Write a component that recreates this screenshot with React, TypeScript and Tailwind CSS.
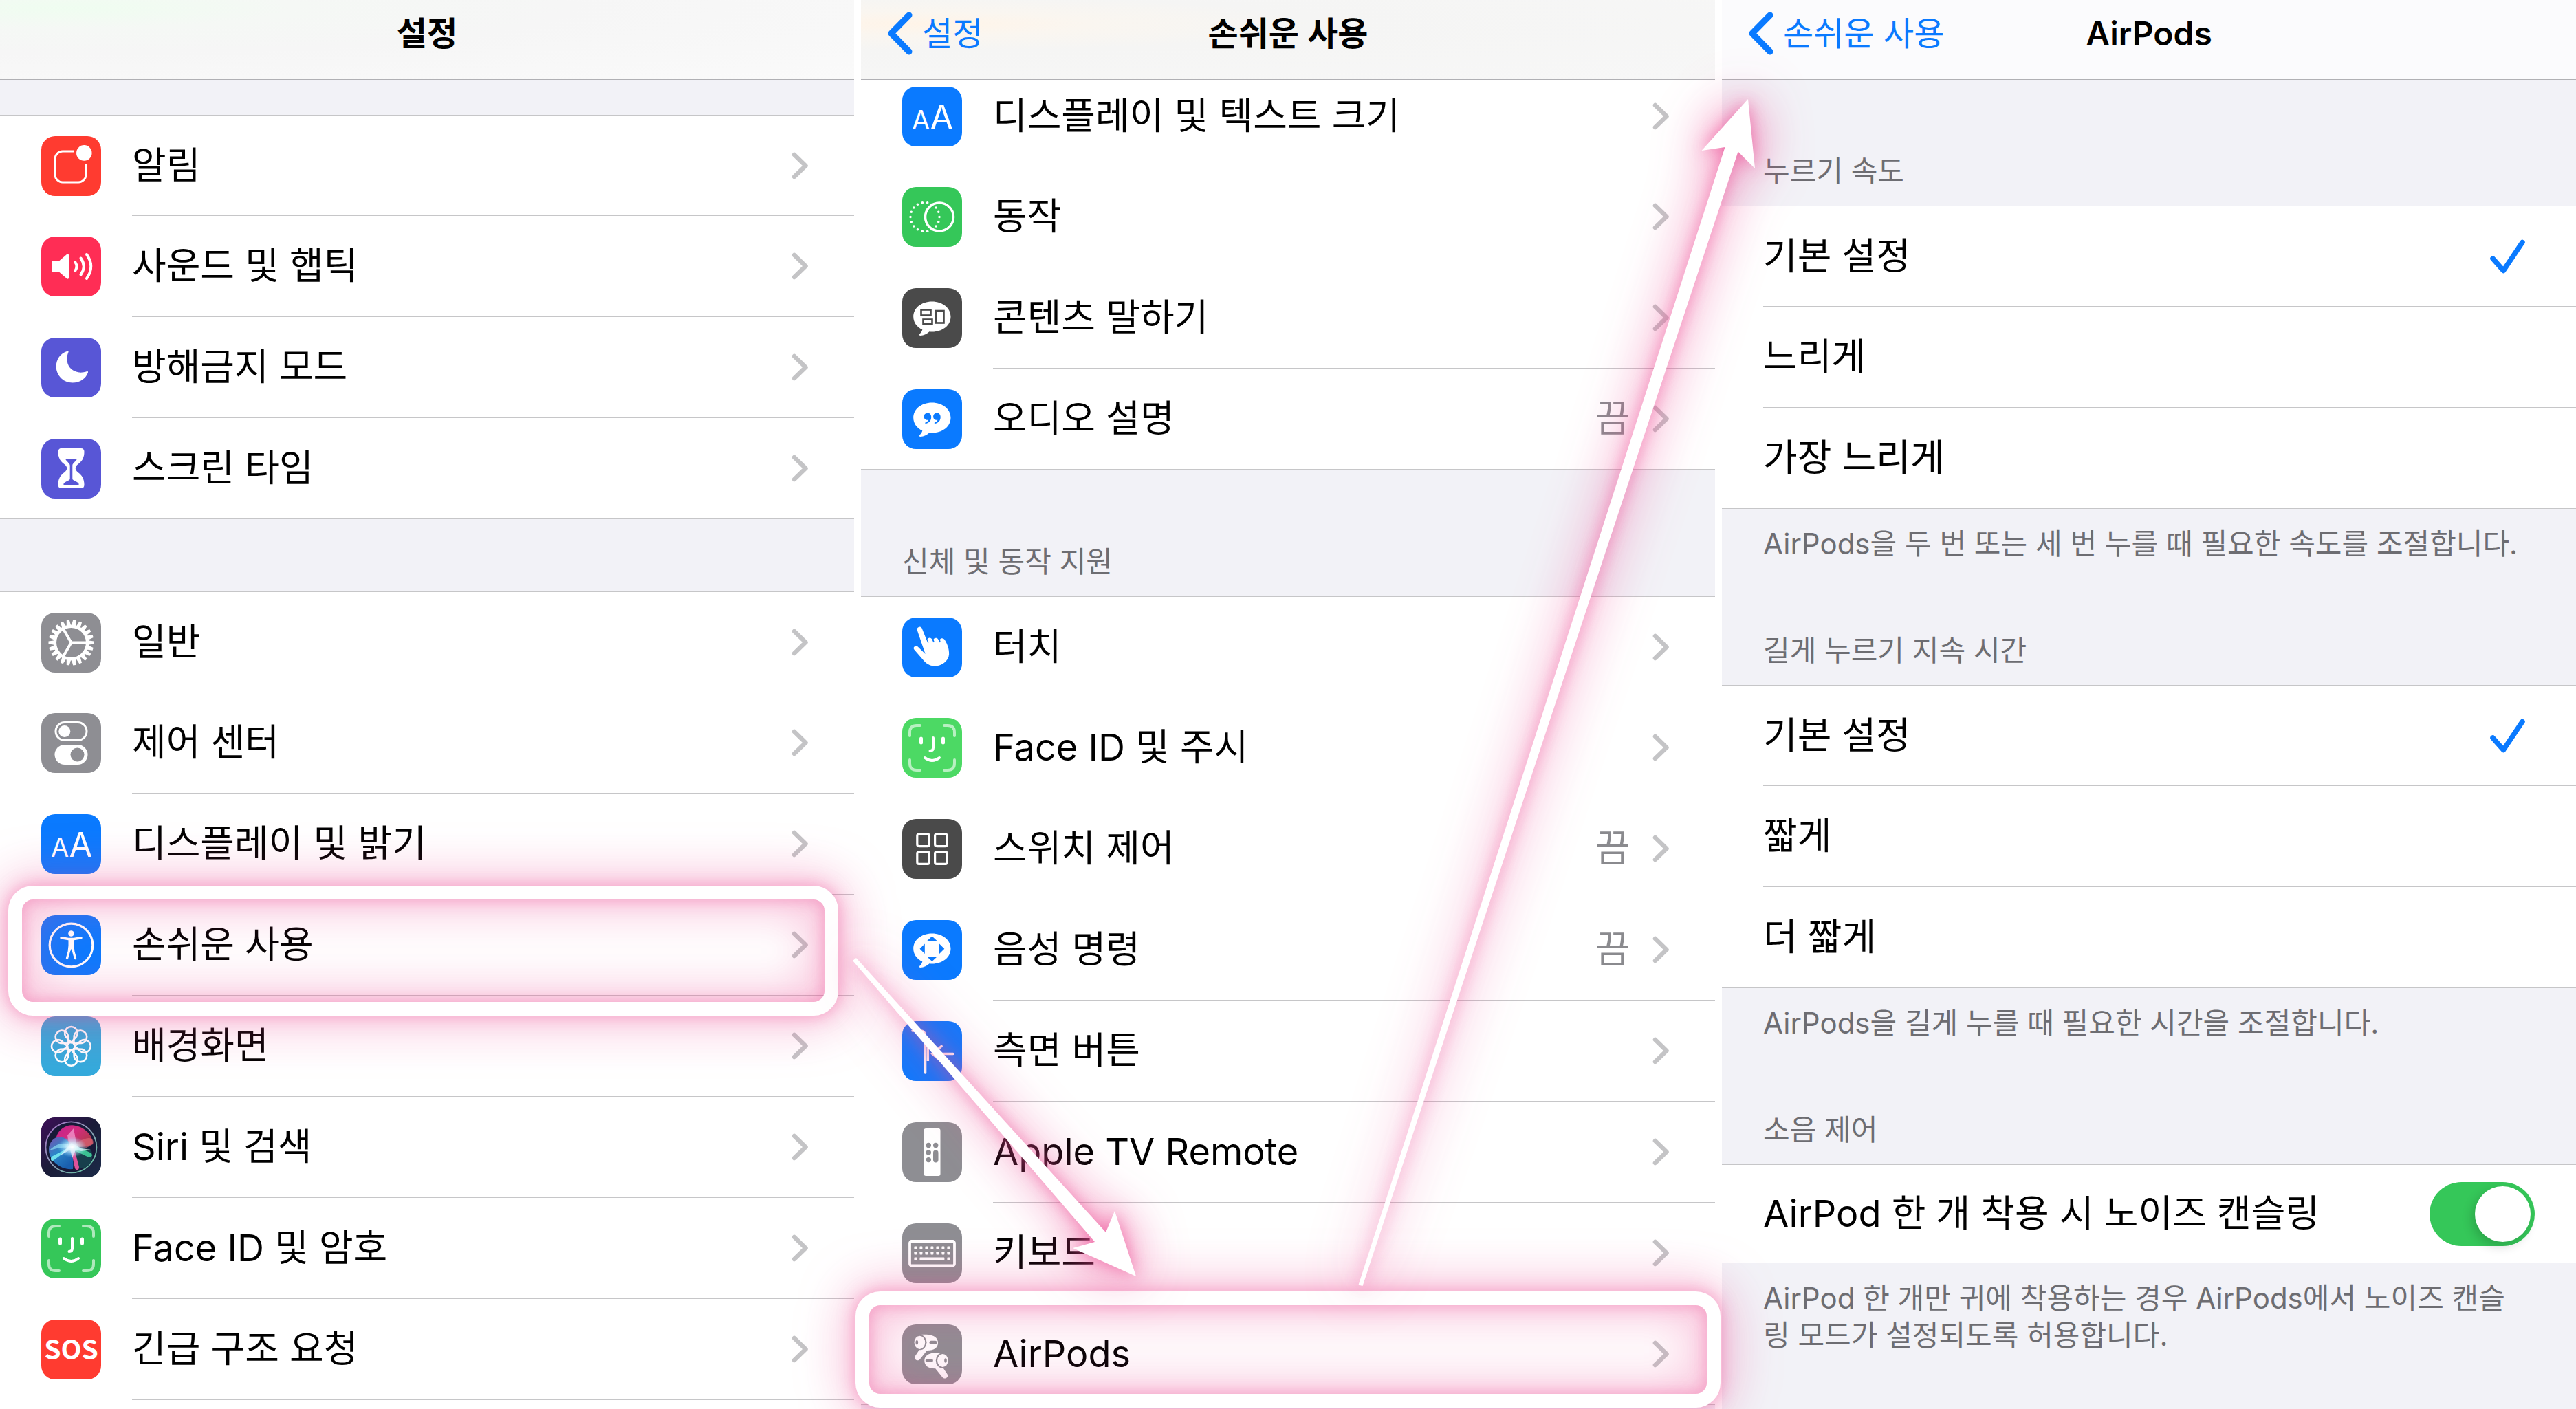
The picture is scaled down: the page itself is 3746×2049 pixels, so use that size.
import { useState } from "react";
import type { ReactNode } from "react";
import clsx from "clsx";

type Item = {
  label: string;
  icon: ReactNode;
  color: string;
  value?: string;
  ring?: string;
};

/* ---------- icons (87 x 87 tiles) ---------- */

const fontLatin = "font-['Inter',sans-serif]";

function BellIcon() {
  return (
    <>
      <path
        d="M47 22H31a11 11 0 0 0-11 11v23a11 11 0 0 0 11 11h23a11 11 0 0 0 11-11V40"
        fill="none"
        stroke="#fff"
        strokeWidth="3"
      />
      <circle cx="62.3" cy="24.4" r="11.3" fill="#fff" />
    </>
  );
}

function SoundIcon() {
  return (
    <g fill="none" stroke="#fff" strokeWidth="4" strokeLinecap="round">
      <path
        d="M18 35h8.500l10.500-9c1.500-1.200 3-.8 3 1.200v32.600c0 2-1.500 2.400-3 1.200l-10.500-9H18c-2 0-3-1-3-3V38c0-2 1-3 3-3z"
        fill="#fff"
        stroke="none"
      />
      <path d="M49.500 37.500q4 6 0 12M57.500 31.500q8.500 12 0 24M66 26q12.500 17.500 0 35" />
    </g>
  );
}

function MoonIcon() {
  return (
    <path
      d="M38.500 19.500C27 23 21.700 32 21.700 42a23.500 23.500 0 0 0 23.500 23.600C56 65.600 65 59.500 68 50.500c.3-1.200-.4-1.800-1.500-1.500-4 1.300-8 2-11.500 1.500C43 49 37 40 37.500 30c.1-4 1-6.500 2-9 .4-1.100-.1-1.700-1-1.500z"
      fill="#fff"
    />
  );
}

function HourglassIcon() {
  return (
    <>
      <path
        d="M29 14h29c3 0 4.500 2 4.500 5 0 9-3.500 14-9 18-5 4-5 8 0 12 5.500 4 9 9 9 18 0 3-1.500 5-4.500 5H29c-3 0-4.500-2-4.500-5 0-9 3.500-14 9-18 5-4 5-8 0-12-5.500-4-9-9-9-18 0-3 1.500-5 4.500-5z"
        fill="#fff"
      />
      <path
        d="M35 29.500h17c-2.500 4.500-6.700 6-6.700 9.500v20c2 2.500 7.700 3.500 9.200 6.500.5 1-.3 2-1.500 2H34c-1.200 0-2-1-1.500-2 1.500-3 7.200-4 9.200-6.500V39c0-3.500-4.200-5-6.700-9.500z"
        fill="#5856d6"
      />
    </>
  );
}

function GearIcon() {
  const teeth = Array.from({ length: 22 }, (_, i) => i);
  return (
    <g transform="translate(43.5 43.5)">
      {teeth.map((i) => (
        <path
          key={i}
          d="M24-3.300L33-2v4L24 3.300z"
          fill="#fff"
          transform={`rotate(${(i * 360) / 22})`}
        />
      ))}
      <circle r="23.700" fill="none" stroke="#fff" strokeWidth="4.500" />
      <path
        d="M0 0H23M0 0L-11.500-20M0 0L-11.500 20"
        stroke="#fff"
        strokeWidth="4"
      />
    </g>
  );
}

function ControlIcon() {
  return (
    <>
      <rect x="21" y="13.500" width="45" height="26" rx="13" fill="none" stroke="#fff" strokeWidth="3" />
      <circle cx="33.800" cy="26.500" r="8.500" fill="#fff" />
      <rect x="19.500" y="46" width="48" height="29" rx="14.500" fill="#fff" />
      <circle cx="52.500" cy="60.500" r="10" fill="#8e8e93" />
    </>
  );
}

function TextSizeIcon() {
  return (
    <g fill="#fff" textAnchor="middle" className={fontLatin}>
      <text x="27" y="62" fontSize="38">
        A
      </text>
      <text x="57.500" y="62" fontSize="49">
        A
      </text>
    </g>
  );
}

function AccessibilityIcon() {
  return (
    <g stroke="#fff" strokeLinecap="round" strokeLinejoin="round">
      <circle cx="43.500" cy="43.500" r="31.300" fill="none" strokeWidth="3.200" />
      <circle cx="43.500" cy="26.500" r="4.200" fill="#fff" stroke="none" />
      <path d="M29 32.700l10.500 1.800h8L58 32.700M41 50l-3.500 12.500M46 50l3.500 12.500" fill="none" strokeWidth="3.400" />
      <path d="M40.500 35.500h6V44l.8 7h-2L43.500 46l-1.800 5h-2l.8-7z" fill="#fff" strokeWidth="2" />
    </g>
  );
}

function FlowerIcon() {
  return (
    <g transform="translate(43.4 43.4)" fill="none" stroke="#fff" strokeWidth="2.600">
      {[0, 45, 90, 135, 180, 225, 270, 315].map((deg) => (
        <path
          key={deg}
          d="M0-5.500L-7.800-14A9.300 9.300 0 1 1 7.800-14z"
          transform={`rotate(${deg})`}
        />
      ))}
      <circle r="5.500" />
    </g>
  );
}

function SiriIcon() {
  return (
    <>
      <defs>
        <linearGradient id="siriBg" x1="0" y1="0" x2="1" y2="1">
          <stop offset="0" stopColor="#3d0f58" />
          <stop offset=".5" stopColor="#1a1c38" />
          <stop offset="1" stopColor="#1b2b48" />
        </linearGradient>
        <linearGradient id="siriPink" x1="0" y1="0" x2="1" y2=".6">
          <stop offset="0" stopColor="#c2228e" />
          <stop offset=".5" stopColor="#d32b7f" />
          <stop offset="1" stopColor="#b23a4c" />
        </linearGradient>
        <linearGradient id="siriBlue" x1="0" y1="0" x2=".6" y2="1">
          <stop offset="0" stopColor="#7a4fb0" />
          <stop offset=".5" stopColor="#2b86c8" />
          <stop offset="1" stopColor="#1a5fae" />
        </linearGradient>
        <linearGradient id="siriRim" x1="0" y1="0" x2="1" y2="1">
          <stop offset="0" stopColor="#a56ac4" />
          <stop offset=".5" stopColor="#8fa0b8" />
          <stop offset="1" stopColor="#56c29a" />
        </linearGradient>
        <radialGradient id="siriGlow">
          <stop offset="0" stopColor="#fff" />
          <stop offset=".4" stopColor="#d8f4ff" stopOpacity=".8" />
          <stop offset="1" stopColor="#8fd8ff" stopOpacity="0" />
        </radialGradient>
      </defs>
      <rect width="87" height="87" fill="url(#siriBg)" />
      <circle cx="43.400" cy="43.400" r="37" fill="#171a38" stroke="url(#siriRim)" strokeWidth="1.800" />
      <path d="M22 28C26 15 40 9 50 12c15 3 25 15 25 26-8 6-22 4-31 4-5-8-14-14-22-14z" fill="url(#siriPink)" />
      <path d="M11 46c0-10 8-18 16-18 9 1 15 8 17 14 2 12 3 24 2 33-10 1-20-3-27-10-6-6-8-13-8-19z" fill="url(#siriBlue)" />
      <path d="M44 42l27 4c6 6 4 20-4 25-6 4-14 4-17 3z" fill="#173f4c" />
      <path d="M44 42l22 2 9-5c2-4 0-9-6-9-9 1-18 6-25 12z" fill="#e06a7a" opacity=".6" />
      <path d="M42 38l29 13c5 3 3 8-4 6L44 46z" fill="#3fd09a" opacity=".9" />
      <path d="M42 42h5l8 30c0 5-4 6-6 2z" fill="#e0529a" />
      <path d="M48 40L17 63c-3 1-4-3-2-6z" fill="#6fe0ec" />
      <path d="M41 43L38 26l9-10 5 26z" fill="#f3a2d4" opacity=".7" />
      <path d="M43 45c-8-3-22 0-31 3 8-9 22-15 33-5z" fill="#8adcf2" opacity=".7" />
      <path d="M44 37l14 8 14 2-14 2-8-2-5 12-3-12-14 8 12-14z" fill="#fff" opacity=".7" />
      <ellipse cx="45" cy="43" rx="21" ry="15" fill="url(#siriGlow)" />
    </>
  );
}

function FaceIcon() {
  return (
    <g fill="none" stroke="#fff" strokeWidth="5" strokeLinecap="round">
      <g opacity=".6" strokeWidth="4">
        <path d="M11 26v-5q0-10 10-10h5M61 11h5q10 0 10 10v5M76 61v5q0 10-10 10h-5M26 76h-5q-10 0-10-10v-5" />
      </g>
      <path d="M27.500 30v6M59.500 30v6" />
      <path d="M45 29v14.500q0 4.500-4.500 4.500M33 58q10.500 8 21 0" strokeWidth="4" />
    </g>
  );
}

function SosIcon() {
  return (
    <text
      x="43.500"
      y="58"
      fontSize="39"
      fontWeight="700"
      textAnchor="middle"
      fill="#fff"
      className="font-['Noto_Sans_CJK_KR',sans-serif]"
    >
      SOS
    </text>
  );
}

function MotionIcon() {
  const dots = Array.from({ length: 18 }, (_, i) => (i * Math.PI * 2) / 18);
  return (
    <>
      {dots.map((a) => (
        <circle key={a} cx={33 + 21 * Math.cos(a)} cy={43.5 + 21 * Math.sin(a)} r="1.800" fill="#fff" />
      ))}
      <circle cx="54" cy="43.500" r="20.500" fill="none" stroke="#fff" strokeWidth="3.500" />
    </>
  );
}

function Bubble() {
  return (
    <path
      d="M43.300 19.500c15.500 0 27.200 9.500 27.200 22s-11.700 22-27.200 22c-1.300 0-2.600 0-3.800-.2-3.500 3.200-8 5.500-13 5.700-1.700 0-2.200-1.400-1-2.600 2-2 3.400-4 3.800-6.200C21 56.400 16.200 49.500 16.200 41.500c0-12.500 11.600-22 27.100-22z"
      fill="#fff"
    />
  );
}

function SpeakContentIcon() {
  return (
    <>
      <Bubble />
      <g fill="none" stroke="#4a4a4a" strokeWidth="2.600">
        <rect x="27.500" y="31.500" width="14" height="8" />
        <rect x="30.500" y="45.500" width="13" height="6.500" />
        <rect x="49" y="33" width="11.500" height="17.500" />
      </g>
    </>
  );
}

function QuoteIcon() {
  return (
    <>
      <Bubble />
      <g fill="#0a7aff">
        <path d="M37 34.500c3.200 0 5.200 2.400 5.200 6 0 5-3 8.500-7.700 9.500-1.500.2-1.700-1.300-.6-1.700 2.400-.9 3.600-2 4-3.600-3.500.8-6.300-1.500-6.300-4.900 0-3 2.300-5.300 5.400-5.300z" />
        <path d="M50.500 34.500c3.200 0 5.200 2.400 5.200 6 0 5-3 8.500-7.700 9.500-1.500.2-1.700-1.300-.6-1.700 2.400-.9 3.600-2 4-3.600-3.500.8-6.300-1.500-6.300-4.900 0-3 2.300-5.300 5.400-5.300z" />
      </g>
    </>
  );
}

function TouchIcon() {
  return (
    <path
      d="M21.800 18.400a3.700 3.700 0 0 1 6.800-2.800L37.200 37l1.200-.6-1.900-4.400c.8-2.800 4.600-3.400 6.500-.8l2.400 5 1.400-.6-1.300-3.600c1.300-2.800 5-3 6.800-.2l2.200 4.400 1.400-.5-1.100-3.800c2-2.600 5.800-1.900 7.500 1.300C65.800 39 68.400 46 68.100 53.500c-.4 5-2.600 8.800-7 12.300-5 4-11.600 5.600-18.200 4.200-5.800-1.300-9.900-5-13.900-10L17.300 46.500c-2.300-3.600 2-6.700 5.200-4.200L33.600 53z"
      fill="#fff"
    />
  );
}

function SwitchIcon() {
  return (
    <g fill="none" stroke="#fff" strokeWidth="3.200">
      <rect x="21.800" y="22" width="17.600" height="17.600" rx="2.500" />
      <rect x="47.600" y="22" width="17.600" height="17.600" rx="2.500" />
      <rect x="21.800" y="47.800" width="17.600" height="17.600" rx="2.500" />
      <rect x="47.600" y="47.800" width="17.600" height="17.600" rx="2.500" />
    </g>
  );
}

function VoiceIcon() {
  return (
    <>
      <Bubble />
      <path
        d="M43.400 23.500l7.600 7H35.800zM43.400 60l7.600-7H35.800zM25.500 41.800l7.300-7.200v14.400zM61.300 41.800L54 34.600v14.400z"
        fill="#0a7aff"
      />
    </>
  );
}

function SideButtonIcon() {
  return (
    <g fill="none" stroke="#fff" strokeWidth="3.600" strokeLinecap="round">
      <path d="M15 14h11q7.500 0 7.500 8v53" />
      <path d="M37.300 32v26" strokeLinecap="butt" />
      <path d="M74 47.500H44M57 36.500l-13 11 13 11" />
    </g>
  );
}

function RemoteIcon() {
  return (
    <>
      <rect x="31.500" y="9" width="24" height="69" rx="3" fill="#fff" />
      <g fill="#8e8e93">
        <circle cx="38.300" cy="33.500" r="3.700" />
        <circle cx="48.700" cy="33.500" r="3.700" />
        <circle cx="38.300" cy="44" r="3.700" />
        <circle cx="38.300" cy="54.600" r="3.700" />
        <rect x="45" y="40.500" width="7.500" height="18" rx="3.700" />
      </g>
    </>
  );
}

function KeyboardIcon() {
  const cols = [19.4, 27.4, 35.4, 43.4, 51.4, 59.4, 67.4];
  return (
    <>
      <rect x="11" y="26" width="65" height="35.500" rx="2.500" fill="none" stroke="#fff" strokeWidth="3.800" />
      <g fill="#fff">
        {cols.map((x) => (
          <g key={x}>
            <rect x={x - 2} y="33.500" width="4" height="4" rx=".8" />
            <rect x={x - 2} y="41.500" width="4" height="4" rx=".8" />
          </g>
        ))}
        <rect x="17.400" y="49.500" width="4" height="4" rx=".8" />
        <rect x="25.400" y="49.500" width="36" height="4" rx=".8" />
        <rect x="65.400" y="49.500" width="4" height="4" rx=".8" />
      </g>
    </>
  );
}

function Pod() {
  return (
    <>
      <path d="M23 15.500C32 14 52 13.500 52 26.500c0 7-5 11.500-16 11.500L25.500 51c-3.500 3.500-9-.5-7-4.500l8-12z" fill="#fff" />
      <ellipse cx="26" cy="26.300" rx="9.500" ry="11" fill="#8e8e93" />
      <ellipse cx="25.400" cy="26.300" rx="7.800" ry="9.600" fill="#fff" />
      <ellipse cx="21.300" cy="26.300" rx="1.800" ry="3.200" fill="#8e8e93" />
      <rect x="39.500" y="23.800" width="11" height="5" rx="2.500" fill="#8e8e93" />
    </>
  );
}

function AirPodsIcon() {
  return (
    <>
      <Pod />
      <g transform="translate(84.3 26.2) scale(-1 1)">
        <Pod />
      </g>
    </>
  );
}

/* ---------- data ---------- */

const alertItems: Item[] = [
  { label: "알림", icon: <BellIcon />, color: "bg-[#ff3b30]" },
  { label: "사운드 및 햅틱", icon: <SoundIcon />, color: "bg-[#ff2d55]" },
  { label: "방해금지 모드", icon: <MoonIcon />, color: "bg-[#5856d6]" },
  { label: "스크린 타임", icon: <HourglassIcon />, color: "bg-[#5856d6]" },
];

const generalItems: Item[] = [
  { label: "일반", icon: <GearIcon />, color: "bg-[#8e8e93]" },
  { label: "제어 센터", icon: <ControlIcon />, color: "bg-[#8e8e93]" },
  { label: "디스플레이 및 밝기", icon: <TextSizeIcon />, color: "bg-[#0a7aff]" },
  {
    label: "손쉬운 사용",
    icon: <AccessibilityIcon />,
    color: "bg-[#0a7aff]",
    ring: "left-3 right-[23px] -top-[13px] -bottom-[29px]",
  },
  { label: "배경화면", icon: <FlowerIcon />, color: "bg-[#34aadc]" },
  { label: "Siri 및 검색", icon: <SiriIcon />, color: "bg-[#1a1c38]" },
  { label: "Face ID 및 암호", icon: <FaceIcon />, color: "bg-[#35c759]" },
  { label: "긴급 구조 요청", icon: <SosIcon />, color: "bg-[#ff3b30]" },
];

const visionItems: Item[] = [
  { label: "디스플레이 및 텍스트 크기", icon: <TextSizeIcon />, color: "bg-[#0a7aff]" },
  { label: "동작", icon: <MotionIcon />, color: "bg-[#35c759]" },
  { label: "콘텐츠 말하기", icon: <SpeakContentIcon />, color: "bg-[#4a4a4a]" },
  { label: "오디오 설명", icon: <QuoteIcon />, color: "bg-[#0a7aff]", value: "끔" },
];

const motorItems: Item[] = [
  { label: "터치", icon: <TouchIcon />, color: "bg-[#0a7aff]" },
  { label: "Face ID 및 주시", icon: <FaceIcon />, color: "bg-[#4cd964]" },
  { label: "스위치 제어", icon: <SwitchIcon />, color: "bg-[#4a4a4a]", value: "끔" },
  { label: "음성 명령", icon: <VoiceIcon />, color: "bg-[#0a7aff]", value: "끔" },
  { label: "측면 버튼", icon: <SideButtonIcon />, color: "bg-[#0a7aff]" },
  { label: "Apple TV Remote", icon: <RemoteIcon />, color: "bg-[#8e8e93]" },
  { label: "키보드", icon: <KeyboardIcon />, color: "bg-[#8e8e93]" },
  {
    label: "AirPods",
    icon: <AirPodsIcon />,
    color: "bg-[#8e8e93]",
    ring: "-left-2 -right-2 -top-[18px] -bottom-[5px]",
  },
];

/* ---------- building blocks ---------- */

function Chevron() {
  return (
    <svg viewBox="0 0 24 40" className="h-10 w-6 shrink-0">
      <path
        d="M4 4l16.500 16L4 36"
        fill="none"
        stroke="#c4c4c6"
        strokeWidth="6.500"
        strokeLinecap="round"
        strokeLinejoin="round"
      />
    </svg>
  );
}

type NavBarProps = {
  title: string;
  back?: string;
  className: string;
};

function NavBar({ title, back, className }: NavBarProps) {
  return (
    <header
      className={clsx(
        "relative z-10 grid h-[116px] shrink-0 grid-cols-[1fr_auto_1fr] items-center border-b border-[#b0b0b4] pr-[38px] pb-[18px] pl-[38px] text-[48px] leading-[60px]",
        className
      )}
    >
      {back ? (
        <a href="#" className="flex items-center gap-[14px] text-[#0a7aff]">
          <svg viewBox="0 0 37 63" className="h-[63px] w-[37px]">
            <path
              d="M32 5L6 31.500 32 58"
              fill="none"
              stroke="currentColor"
              strokeWidth="9"
              strokeLinecap="round"
              strokeLinejoin="round"
            />
          </svg>
          {back}
        </a>
      ) : (
        <span />
      )}
      <h1 className="font-semibold">{title}</h1>
      <span />
    </header>
  );
}

function Row({ item, full }: { item: Item; full: boolean }) {
  return (
    <li
      className={clsx(
        "relative h-[147px] first:h-[146px]",
        full && "border-b border-[#c6c6c8]"
      )}
    >
      <button type="button" className="flex h-full w-full items-center gap-[45px] pl-[60px] text-left">
        <svg viewBox="0 0 87 87" className={clsx("size-[87px] shrink-0 rounded-[20px]", item.color)}>
          {item.icon}
        </svg>
        <span
          className={clsx(
            "flex grow items-center self-stretch pr-[67px]",
            !full && "border-b border-[#c6c6c8]"
          )}
        >
          <span className="grow">{item.label}</span>
          {item.value && <span className="pr-[33px] text-[#8a8a8e]">{item.value}</span>}
          <Chevron />
        </span>
      </button>
      {item.ring && (
        <span
          className={clsx(
            "pointer-events-none absolute z-20 rounded-[36px] border-[20px] border-white [filter:drop-shadow(0_0_12px_rgba(236,72,146,.5))_drop-shadow(0_0_36px_rgba(236,72,146,.75))]",
            item.ring
          )}
        />
      )}
    </li>
  );
}

function Group({ items, open, className }: { items: Item[]; open?: boolean; className?: string }) {
  return (
    <ul className={clsx("shrink-0 border-t border-[#c6c6c8] bg-white", className)}>
      {items.map((item, i) => (
        <Row key={item.label} item={item} full={!open && i === items.length - 1} />
      ))}
    </ul>
  );
}

function SectionTitle({ children, className }: { children: ReactNode; className: string }) {
  return (
    <h2 className={clsx("flex shrink-0 items-end px-[60px] pb-[23px] text-[42px] leading-[54px] text-[#6d6d72]", className)}>
      {children}
    </h2>
  );
}

function Note({ children }: { children: ReactNode }) {
  return (
    <p className="shrink-0 pt-6 pr-[76px] pl-[60px] text-[42px] leading-[54px] text-[#6d6d72]">
      {children}
    </p>
  );
}

function RadioGroup({ name, options }: { name: string; options: string[] }) {
  const [selected, setSelected] = useState(options[0]);

  return (
    <div role="radiogroup" aria-label={name} className="shrink-0 border-y border-[#c6c6c8] bg-white pl-[60px]">
      {options.map((option) => (
        <label
          key={option}
          className="relative flex h-[147px] items-center border-b border-[#c6c6c8] pr-[74px] first:h-[146px] last:h-[146px] last:border-b-0"
        >
          <input
            type="radio"
            name={name}
            className="peer sr-only"
            checked={selected === option}
            onChange={() => setSelected(option)}
          />
          <span className="grow">{option}</span>
          <svg viewBox="0 0 51 50" className="invisible h-[50px] w-[51px] peer-checked:visible">
            <path
              d="M4 28l15.500 17.500L47 4.500"
              fill="none"
              stroke="#0a7aff"
              strokeWidth="7.500"
              strokeLinecap="round"
              strokeLinejoin="round"
            />
          </svg>
        </label>
      ))}
    </div>
  );
}

// Setas que ligam uma tela à seguinte
function Arrows() {
  return (
    <svg
      viewBox="0 0 3746 2049"
      className="pointer-events-none absolute inset-0 z-30 h-full w-full [filter:drop-shadow(0_0_12px_rgba(236,72,146,.65))_drop-shadow(0_0_36px_rgba(236,72,146,.85))]"
    >
      <path d="M1240 1397L1245 1393L1608 1792L1621 1761L1652 1856L1560 1815L1592 1806z" fill="#fff" />
      <path d="M1975.500 1868.500L1981.500 1870L2527.500 220.500L2552 245L2542 144L2474.500 219L2508.500 214z" fill="#fff" />
    </svg>
  );
}

export default function App() {
  const [noiseCancel, setNoiseCancel] = useState(true);

  return (
    <main
      lang="ko"
      className="relative grid h-screen grid-cols-3 gap-[10px] overflow-hidden bg-white font-['Inter','Noto_Sans_CJK_KR',sans-serif] text-[54px] leading-[72px] text-black"
    >
      <section className="flex min-w-0 flex-col bg-[#f2f2f7]">
        <NavBar
          title="설정"
          className="bg-[radial-gradient(ellipse_at_8%_10%,#effdf0_0%,#f5f8f5_20%,#f6f6f6_45%,#fafafa_100%)]"
        />
        <Group items={alertItems} className="mt-[51px]" />
        <Group items={generalItems} open className="mt-[105px] grow" />
      </section>

      <section className="flex min-w-0 flex-col bg-[#f2f2f7]">
        <NavBar
          title="손쉬운 사용"
          back="설정"
          className="bg-[radial-gradient(ellipse_at_7%_30%,#fff4e8_0%,#faf6f0_15%,#f5f5f4_35%,#f7f7f7_100%)]"
        />
        <Group items={visionItems} className="-mt-[21px]" />
        <SectionTitle className="h-[184px]">신체 및 동작 지원</SectionTitle>
        <Group items={motorItems} />
      </section>

      <section className="flex min-w-0 flex-col bg-[#f2f2f7]">
        <NavBar title="AirPods" back="손쉬운 사용" className="bg-[#fbfbfd]" />
        <SectionTitle className="h-[183px]">누르기 속도</SectionTitle>
        <RadioGroup name="누르기 속도" options={["기본 설정", "느리게", "가장 느리게"]} />
        <Note>AirPods을 두 번 또는 세 번 누를 때 필요한 속도를 조절합니다.</Note>
        <SectionTitle className="h-[178px]">길게 누르기 지속 시간</SectionTitle>
        <RadioGroup name="길게 누르기 지속 시간" options={["기본 설정", "짧게", "더 짧게"]} />
        <Note>AirPods을 길게 누를 때 필요한 시간을 조절합니다.</Note>
        <SectionTitle className="h-[178px]">소음 제어</SectionTitle>
        <label className="flex h-[144px] shrink-0 items-center justify-between border-y border-[#c6c6c8] bg-white px-[60px]">
          AirPod 한 개 착용 시 노이즈 캔슬링
          <input
            type="checkbox"
            role="switch"
            checked={noiseCancel}
            onChange={(e) => setNoiseCancel(e.target.checked)}
            className="flex h-[93px] w-[153px] shrink-0 appearance-none items-center rounded-full bg-[#e9e9eb] px-[6px] before:size-[81px] before:rounded-full before:bg-white before:shadow-[-4px_6px_16px_rgba(0,0,0,.18)] checked:justify-end checked:bg-[#35c759]"
          />
        </label>
        <Note>AirPod 한 개만 귀에 착용하는 경우 AirPods에서 노이즈 캔슬링 모드가 설정되도록 허용합니다.</Note>
      </section>

      <Arrows />
    </main>
  );
}
